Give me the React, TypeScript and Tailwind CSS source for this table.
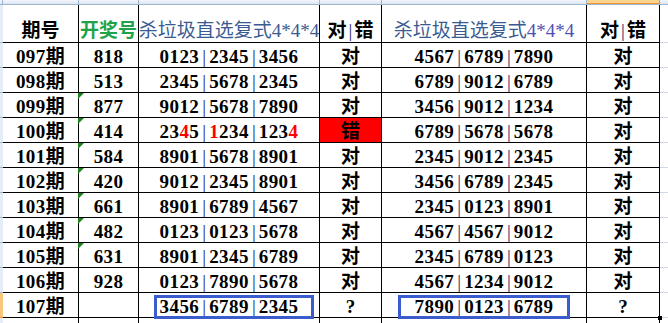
import React from "react";

const W = ["w-[76px]", "w-[60px]", "w-[181px]", "w-[62px]", "w-[205px]", "w-[73px]"];

function Pipe({ w = "w-[10px]" }: { w?: string }) {
  return <span className={`inline-block ${w} text-center font-normal tracking-normal text-[#1d2a6e]`}>|</span>;
}

function Nums({ s }: { s: string }) {
  const parts = s.split("|");
  return (
    <span className="leading-[20px] tracking-[0.4px]">
      {parts.map((p, i) => (
        <React.Fragment key={i}>
          {i > 0 && <Pipe />}
          {p}
        </React.Fragment>
      ))}
    </span>
  );
}

function Red100() {
  return (
    <span className="leading-[20px] tracking-[0.4px]">
      23<span className="text-[#ff0000]">4</span>5
      <Pipe />
      <span className="text-[#ff0000]">1</span>234
      <Pipe />
      123<span className="text-[#ff0000]">4</span>
    </span>
  );
}

type Row = [string, string, string, string, string, string];

const rows: Row[] = [
  ["097期", "818", "0123|2345|3456", "对", "4567|6789|7890", "对"],
  ["098期", "513", "2345|5678|2345", "对", "6789|9012|6789", "对"],
  ["099期", "877", "9012|5678|7890", "对", "3456|9012|1234", "对"],
  ["100期", "414", "RED", "错", "6789|5678|5678", "对"],
  ["101期", "584", "8901|5678|8901", "对", "2345|9012|2345", "对"],
  ["102期", "420", "9012|2345|8901", "对", "3456|6789|2345", "对"],
  ["103期", "661", "8901|6789|4567", "对", "2345|0123|8901", "对"],
  ["104期", "482", "0123|0123|5678", "对", "4567|4567|9012", "对"],
  ["105期", "631", "8901|2345|6789", "对", "2345|6789|0123", "对"],
  ["106期", "928", "0123|7890|5678", "对", "4567|1234|9012", "对"],
  ["107期", "", "3456|6789|2345", "?", "7890|0123|6789", "?"],
];

const cell = "relative flex items-end justify-center whitespace-nowrap border-r border-b border-black shrink-0";

function Triangle() {
  return (
    <div className="absolute left-[-1px] top-0 h-0 w-0 border-t-[6px] border-r-[6px] border-t-[#1e7f1e] border-r-transparent" />
  );
}

function BlueBox({ left, width }: { left: string; width: string }) {
  return <div className={`absolute top-[2px] h-[24px] ${left} ${width} border-[3px] border-[#3a5ccc]`} />;
}

export default function App() {
  return (
    <div className="relative h-[323px] w-[668px] overflow-hidden bg-white font-['Liberation_Serif','Noto_Sans_CJK_SC',serif] text-[19px] font-bold text-black">
      {/* column header strip */}
      <div className="flex h-[5px] border-b border-[#9eb6ce] bg-gradient-to-b from-[#f4f7fc] to-[#dbe5f3]">
        <div className="w-[3px] shrink-0 border-r border-[#9eb6ce]" />
        <div className="w-[76px] shrink-0 border-r border-[#9eb6ce]" />
        <div className="w-[60px] shrink-0 border-r border-[#9eb6ce]" />
        <div className="w-[181px] shrink-0 border-r border-[#9eb6ce]" />
        <div className="w-[62px] shrink-0 border-r border-[#9eb6ce]" />
        <div className="w-[205px] shrink-0 border-r border-[#9eb6ce]" />
        <div className="w-[73px] shrink-0 border-r border-b border-[#f29436] bg-[#f9d48e]" />
        <div className="flex-1" />
      </div>

      {/* header row */}
      <div className="flex h-[38px]">
        <div className="h-full w-[3px] shrink-0 border-b border-[#9eb6ce] bg-[#e4ecf7]" />
        <div className={`${cell} ${W[0]} h-full pb-[1px]`}>
          <span className="leading-[20px]">期号</span>
        </div>
        <div className={`${cell} ${W[1]} h-full overflow-hidden pb-[1px]`}>
          <span className="leading-[20px] text-[#1ea34a]">开奖号</span>
        </div>
        <div className={`${cell} ${W[2]} h-full overflow-hidden pb-[1px]`}>
          <span className="leading-[20px] font-normal text-[#3a5b92]">杀垃圾直选复式4*4*4</span>
        </div>
        <div className={`${cell} ${W[3]} h-full pb-[1px]`}>
          <span className="leading-[20px]">
            对<Pipe w="w-[8px]" />错
          </span>
        </div>
        <div className={`${cell} ${W[4]} h-full overflow-hidden pb-[1px]`}>
          <span className="leading-[20px] font-normal text-[#3a5b92]">
            杀垃圾直选复式<span className="text-[#4f4fb5]">4*4*4</span>
          </span>
        </div>
        <div className={`${cell} ${W[5]} h-full pb-[1px]`}>
          <span className="leading-[20px]">
            对<Pipe w="w-[8px]" />错
          </span>
        </div>
        <div className="h-full flex-1 border-b border-[#d0d7e5]" />
      </div>

      {rows.map((r, i) => {
        const last = i === rows.length - 1;
        const tri = i >= 2 && i <= 8;
        return (
          <div key={i} className="flex h-[25px]">
            <div
              className={`h-full w-[3px] shrink-0 border-b ${last ? "border-[#f29436] bg-[#f8c77c]" : "border-[#9eb6ce] bg-[#e4ecf7]"}`}
            />
            <div className={`${cell} ${W[0]} h-full`}>
              <span className="leading-[20px] tracking-[0.4px]">{r[0]}</span>
            </div>
            <div className={`${cell} ${W[1]} h-full`}>
              {tri && <Triangle />}
              <span className="leading-[20px] tracking-[0.4px]">{r[1]}</span>
            </div>
            <div className={`${cell} ${W[2]} h-full`}>
              {r[2] === "RED" ? <Red100 /> : <Nums s={r[2]} />}
              {last && <BlueBox left="left-[15px]" width="w-[160px]" />}
            </div>
            <div className={`${cell} ${W[3]} h-full ${r[3] === "错" ? "bg-[#ff0000]" : ""}`}>
              <span className="leading-[20px]">{r[3]}</span>
            </div>
            <div className={`${cell} ${W[4]} h-full`}>
              <Nums s={r[4]} />
              {last && <BlueBox left="left-[16px]" width="w-[172px]" />}
            </div>
            <div className={`${cell} ${W[5]} h-full`}>
              <span className="leading-[20px]">{r[5]}</span>
              {last && <div className="absolute bottom-[-3px] right-[-3px] h-[4px] w-[4px] bg-black" />}
            </div>
            <div className="h-full flex-1 border-b border-[#d0d7e5]" />
          </div>
        );
      })}

      {/* partial next row */}
      <div className="flex h-[12px]">
        <div className="h-full w-[3px] shrink-0 bg-[#e4ecf7]" />
        {W.map((w, i) => (
          <div key={i} className={`h-full shrink-0 border-r border-black ${w}`} />
        ))}
        <div className="h-full flex-1" />
      </div>
    </div>
  );
}
